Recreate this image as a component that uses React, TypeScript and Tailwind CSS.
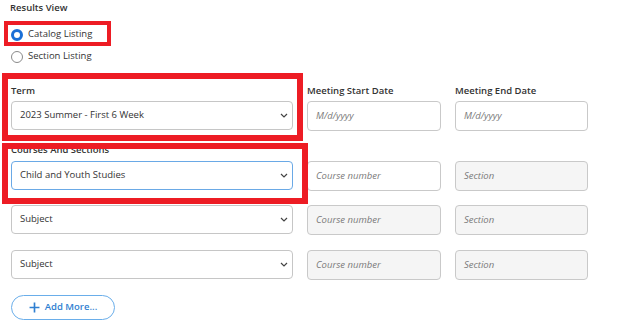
import React from "react";

function Chevron() {
  return (
    <svg width="8" height="5" viewBox="0 0 8 5" className="shrink-0">
      <path d="M1 1 L4 4 L7 1" fill="none" stroke="#444" strokeWidth="1.2" />
    </svg>
  );
}

function Select({ text, focused }: { text: string; focused?: boolean }) {
  return (
    <div
      className={
        "h-[29px] rounded-[4px] border bg-white flex items-center justify-between pl-[8px] pr-[4px] text-[9.5px] text-[#333] " +
        (focused ? "border-[#6aa9e6]" : "border-[#c6c6c6]")
      }
    >
      <span>{text}</span>
      <Chevron />
    </div>
  );
}

function Input({ ph, disabled }: { ph: string; disabled?: boolean }) {
  return (
    <div
      className={
        "h-[30px] rounded-[4px] border border-[#c9c9c9] flex items-center pl-[8px] text-[9.5px] italic text-[#7a7a7a] " +
        (disabled ? "bg-[#f5f5f5]" : "bg-white")
      }
    >
      {ph}
    </div>
  );
}

function Label({ children }: { children: React.ReactNode }) {
  return <div className="text-[9.5px] font-semibold text-[#333] leading-[12px] h-[12px]">{children}</div>;
}

export default function App() {
  return (
    <div
      className="relative w-[624px] h-[332px] bg-white overflow-hidden"
      style={{ fontFamily: '"Open Sans", "Liberation Sans", sans-serif' }}
    >
      <div className="flex flex-col pl-[11px] pt-[2px]">
        <div className="text-[9.5px] font-semibold text-[#333] leading-[12px] -ml-[1px]">Results View</div>
        <div className="flex flex-col gap-[9px] mt-[14px]">
          <div className="flex items-center gap-[5px] h-[13px]">
            <span className="w-[12px] h-[12px] rounded-full border-[3.5px] border-[#1b6fd6] bg-white" />
            <span className="text-[9.5px] text-[#333]">Catalog Listing</span>
          </div>
          <div className="flex items-center gap-[5px] h-[13px]">
            <span className="w-[12px] h-[12px] rounded-full border border-[#8a8a8a] bg-white" />
            <span className="text-[9.5px] text-[#333]">Section Listing</span>
          </div>
        </div>

        <div className="grid grid-cols-[282px_134px_133px] gap-x-[14px] mt-[22px]">
          <Label>Term</Label>
          <Label>Meeting Start Date</Label>
          <Label>Meeting End Date</Label>
          <div className="mt-[4px] col-span-3 grid grid-cols-[282px_134px_133px] gap-x-[14px]">
            <Select text="2023 Summer - First 6 Week" />
            <Input ph="M/d/yyyy" />
            <Input ph="M/d/yyyy" />
          </div>

          <div className="col-span-3 mt-[13px]">
            <Label>Courses And Sections</Label>
          </div>
          <div className="mt-[5px] col-span-3 grid grid-cols-[282px_134px_133px] gap-x-[14px]">
            <Select text="Child and Youth Studies" focused />
            <Input ph="Course number" />
            <Input ph="Section" disabled />
          </div>

          <div className="mt-[14px] col-span-3 grid grid-cols-[282px_134px_133px] gap-x-[14px]">
            <Select text="Subject" />
            <Input ph="Course number" disabled />
            <Input ph="Section" disabled />
          </div>

          <div className="mt-[15px] col-span-3 grid grid-cols-[282px_134px_133px] gap-x-[14px]">
            <Select text="Subject" />
            <Input ph="Course number" disabled />
            <Input ph="Section" disabled />
          </div>
        </div>

        <div className="mt-[15px]">
          <button className="w-[104px] h-[25px] rounded-full border border-[#6aaeea] bg-white flex items-center justify-center gap-[5px] text-[9.5px] font-semibold text-[#2f7fd1]">
            <svg width="11" height="11" viewBox="0 0 10 10">
              <path d="M5 0.5 V9.5 M0.5 5 H9.5" stroke="#2f7fd1" strokeWidth="1.5" />
            </svg>
            <span>Add More...</span>
          </button>
        </div>
      </div>

      {/* red annotation boxes */}
      <div className="absolute left-[4px] top-[21px] w-[107px] h-[25px] border-[4px] border-[#ed1c24]" />
      <div className="absolute left-[2px] top-[73px] w-[301px] h-[68px] border-[6px] border-[#ed1c24]" />
      <div className="absolute left-[2px] top-[143px] w-[306px] h-[61px] border-[6px] border-[#ed1c24]" />
    </div>
  );
}
